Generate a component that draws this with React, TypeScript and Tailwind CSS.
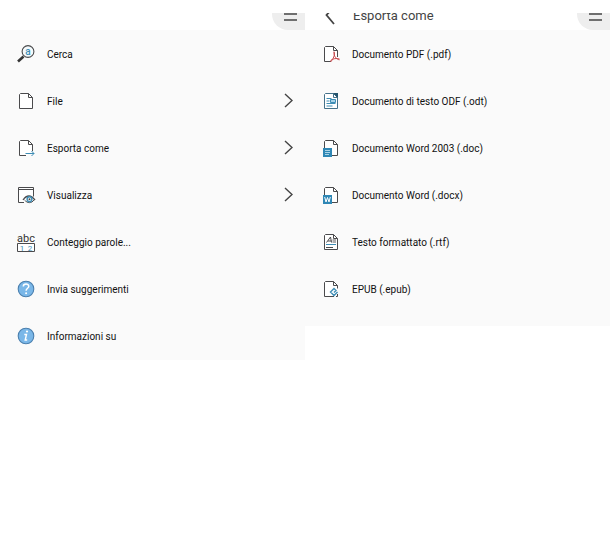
import type { ReactNode } from "react";

type MenuItem = {
  label: string;
  icon: ReactNode;
  hasSubmenu?: boolean;
};

const INK = "#4a4a4c";
const BLUE = "#3d8db5";

function Icon({ children }: { children: ReactNode }) {
  return (
    <svg
      viewBox="0 0 21 21"
      className="size-[21px] shrink-0"
      fill="none"
      stroke={INK}
      aria-hidden="true"
    >
      {children}
    </svg>
  );
}

function Page({ color = INK }: { color?: string }) {
  return (
    <>
      <path d="M5.5 3.5h8l4 4v11h-13v-14z" fill="#fff" stroke={color} />
      <path d="M13.5 3.5v4h4" stroke={color} />
    </>
  );
}

const searchIcon = (
  <Icon>
    <path d="M8.5 13.5l-5.5 5" strokeWidth="2.6" stroke="#333" />
    <circle cx="13" cy="8.5" r="5.9" fill="#f4fafc" strokeWidth="1.1" />
    <text x="13" y="11.6" textAnchor="middle" fontSize="10" fontWeight="500" fill={BLUE} stroke="none">
      a
    </text>
  </Icon>
);

const fileIcon = (
  <Icon>
    <Page />
  </Icon>
);

const exportIcon = (
  <Icon>
    <path d="M11 18.5H4.5v-14l1-1h8l4 4V14" fill="#fff" />
    <path d="M13.5 3.5v4h4" />
    <path d="M10.5 16.5h8.5M16.5 14l2.5 2.5-2.5 2.5" stroke={BLUE} />
  </Icon>
);

const viewIcon = (
  <Icon>
    <path d="M9 18.5H3.5v-15h15v9" fill="#fff" />
    <path d="M3.5 5.5h15" />
    <path d="M8 16c2-3 4-4 6-4s4 1.5 6 4" strokeWidth="1.3" />
    <path d="M9.5 16c3 3.5 7 3.5 9.5 0" />
    <circle cx="14.5" cy="15.2" r="2.4" stroke={BLUE} strokeWidth="1.4" />
    <circle cx="14.5" cy="15.2" r="1" fill={INK} stroke="none" />
  </Icon>
);

const countIcon = (
  <Icon>
    <text x="11" y="10.5" textAnchor="middle" fontSize="11" fill="#333" stroke="none">
      abc
    </text>
    <path d="M2.5 12.5h17v8h-17z" fill="#fff" />
    <g fontSize="8" fill={BLUE} stroke="none" textAnchor="middle">
      <text x="7" y="19.5">1</text>
      <text x="15" y="19.5">2</text>
    </g>
  </Icon>
);

const helpIcon = (
  <Icon>
    <circle cx="11" cy="11" r="7.8" fill="#7ab7e8" stroke="#4a7fae" strokeWidth="1.1" />
    <path
      d="M8.3 8.5c0-3.3 5.5-3.2 5.5-.2 0 2-2.7 2-2.7 4.5"
      stroke="#fff"
      strokeWidth="1.5"
    />
    <circle cx="11.1" cy="15.2" r="1" fill="#fff" stroke="none" />
  </Icon>
);

const aboutIcon = (
  <Icon>
    <circle cx="11" cy="11" r="7.8" fill="#7ab7e8" stroke="#4a7fae" strokeWidth="1.1" />
    <path d="M9.3 9.5h2.2l-1.3 5.5h2" stroke="#fff" strokeWidth="1.4" />
    <circle cx="12" cy="6.5" r="1.1" fill="#fff" stroke="none" />
  </Icon>
);

const pdfIcon = (
  <Icon>
    <path d="M11 18.5H4.5v-14l1-1h8l4 4V14" fill="#fff" />
    <path d="M13.5 3.5v4h4" />
    <path
      d="M14 8.5c1.5 3-1 8-3.5 10.5M14 9c-.5 4 2.5 7.5 5.5 7.8M10.5 17.5c2.5-2 6-2.5 9-1.5"
      stroke="#c8484c"
    />
  </Icon>
);

const odtIcon = (
  <Icon>
    <Page color="#44718a" />
    <path d="M13 3h5v5z" fill="#24546d" stroke="none" />
    <path d="M6.5 8.5h5M6.5 11h3M6.5 13.5h9M6.5 16h6" stroke={BLUE} />
    <path d="M10.5 9.5h5v3h-5z" fill="#a9d3e8" stroke={BLUE} />
  </Icon>
);

const docIcon = (
  <Icon>
    <Page />
    <path d="M3 11h9v9H3z" fill="#2f87b5" stroke="none" />
    <path d="M5 13.5h5M5 15.5h5M5 17.5h4" stroke="#b9dcec" strokeWidth=".9" />
  </Icon>
);

const docxIcon = (
  <Icon>
    <Page />
    <path d="M3 11h9v9H3z" fill="#2f87b5" stroke="none" />
    <path d="M4.7 13l1.3 5 1.5-4.5L9 18l1.3-5" stroke="#fff" />
  </Icon>
);

const rtfIcon = (
  <Icon>
    <Page />
    <path d="M6.5 11.5l4-5.5 1 5.5M8 10h3.5" />
    <path d="M12.5 9h3.5M12.5 11h3.5" strokeWidth=".9" />
    <path d="M6 13.5h10" stroke={BLUE} />
    <path d="M6 16.5h7" />
  </Icon>
);

const epubIcon = (
  <Icon>
    <path d="M14 18.5H4.5v-14l1-1h8l4 4v3M17.5 16v2.5H16" fill="#fff" />
    <path d="M13.5 3.5v4h4" />
    <path
      d="M14 14.5l2-2-2-2-3.5 3.5 3.5 3.5 3.5-3.5"
      stroke={BLUE}
      strokeWidth="1.4"
    />
  </Icon>
);

const mainItems: MenuItem[] = [
  { label: "Cerca", icon: searchIcon },
  { label: "File", icon: fileIcon, hasSubmenu: true },
  { label: "Esporta come", icon: exportIcon, hasSubmenu: true },
  { label: "Visualizza", icon: viewIcon, hasSubmenu: true },
  { label: "Conteggio parole...", icon: countIcon },
  { label: "Invia suggerimenti", icon: helpIcon },
  { label: "Informazioni su", icon: aboutIcon },
];

const exportItems: MenuItem[] = [
  { label: "Documento PDF (.pdf)", icon: pdfIcon },
  { label: "Documento di testo ODF (.odt)", icon: odtIcon },
  { label: "Documento Word 2003 (.doc)", icon: docIcon },
  { label: "Documento Word (.docx)", icon: docxIcon },
  { label: "Testo formattato (.rtf)", icon: rtfIcon },
  { label: "EPUB (.epub)", icon: epubIcon },
];

function MenuToggle() {
  return (
    <button
      type="button"
      aria-label="Menu"
      className="ml-auto flex h-[17px] w-[33px] items-start rounded-bl-2xl bg-[#eeeeee] pl-3"
    >
      <svg viewBox="0 0 13 9" className="h-[9px] w-[13px]" stroke="#454545" strokeWidth="1.6" aria-hidden="true">
        <path d="M0 1h13M0 7h13" />
      </svg>
    </button>
  );
}

function MenuList({ items }: { items: MenuItem[] }) {
  return (
    <ul>
      {items.map((item) => (
        <li key={item.label}>
          <button
            type="button"
            className="flex h-[47px] w-full items-center gap-[11px] pr-3 pl-[15px] text-left"
          >
            {item.icon}
            <span className="grow pt-0.5">{item.label}</span>
            {item.hasSubmenu && (
              <svg
                viewBox="0 0 9 15"
                className="h-[15px] w-[9px]"
                fill="none"
                stroke="#444"
                strokeWidth="1.4"
                aria-hidden="true"
              >
                <path d="M1 1l7 6.5L1 14" />
              </svg>
            )}
          </button>
        </li>
      ))}
    </ul>
  );
}

export default function App() {
  return (
    <main className="grid min-h-screen grid-cols-2 items-start bg-white pt-[13px] font-['Roboto','Open_Sans',sans-serif] text-[10px] leading-4 text-[#111]">
      <section>
        <header className="flex h-[17px] overflow-hidden">
          <MenuToggle />
        </header>
        <nav className="bg-[#fafafa] pb-px" aria-label="Menu">
          <MenuList items={mainItems} />
        </nav>
      </section>

      <section>
        <header className="flex h-[17px] items-center overflow-hidden pl-5">
          <button type="button" aria-label="Indietro" className="mr-[18px] mb-3 shrink-0">
            <svg viewBox="0 0 10 18" className="h-[18px] w-[10px]" fill="none" stroke="#444" strokeWidth="1.8" aria-hidden="true">
              <path d="M9 0L1.5 8 9 17" />
            </svg>
          </button>
          <h1 className="mb-3 text-[13px] leading-4 text-[#444]">Esporta come</h1>
          <MenuToggle />
        </header>
        <nav className="bg-[#fafafa] pb-[14px]" aria-label="Esporta come">
          <MenuList items={exportItems} />
        </nav>
      </section>
    </main>
  );
}
